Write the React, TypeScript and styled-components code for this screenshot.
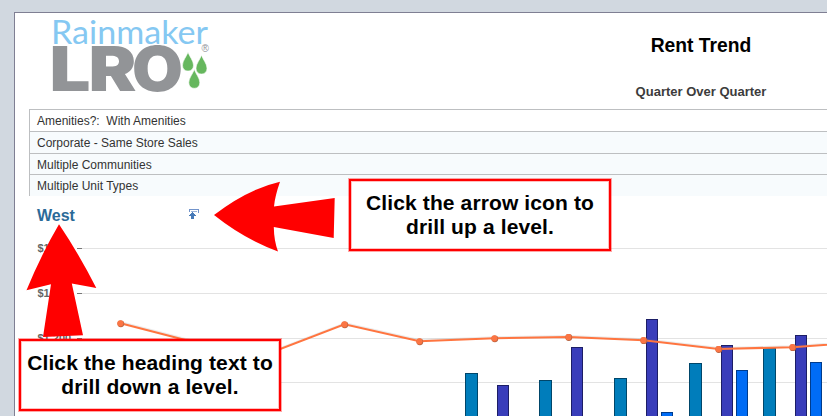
import React from "react";
import styled, { createGlobalStyle } from "styled-components";

const GlobalStyle = createGlobalStyle`
  * { box-sizing: border-box; }
  body {
    margin: 0;
    background: #d1d8e0;
    font-family: "Liberation Sans", Arial, sans-serif;
    overflow: hidden;
  }
`;

const Page = styled.div`
  position: relative;
  width: 827px;
  height: 416px;
  padding: 12px 0 0 14px;
  overflow: hidden;
`;

const Report = styled.main`
  height: 404px;
  border: solid #7f7f93;
  border-width: 1px 0 0 1px;
  background: #fff;
`;

const Header = styled.header`
  display: flex;
  height: 96px;
  padding-left: 35px;
`;

const Logo = styled.svg`
  flex: none;
  width: 170px;
  height: 84px;
  overflow: visible;
`;

const Titles = styled.div`
  display: flex;
  flex-direction: column;
  align-items: center;
  width: 200px;
  margin-left: 381px;
`;

const Title = styled.h1`
  margin: 21px 0 0;
  font-size: 19.3px;
  line-height: 23px;
  color: #000;
  white-space: nowrap;
`;

const Subtitle = styled.h2`
  margin: 27px 0 0;
  font-size: 13px;
  line-height: 15px;
  color: #3c3c3c;
  white-space: nowrap;
`;

const Filters = styled.ul`
  margin: 0 0 0 14px;
  padding: 0;
  list-style: none;
`;

const FilterRow = styled.li<{ $height: number; $tinted?: boolean }>`
  height: ${(p) => p.$height}px;
  padding: 4px 0 0 7px;
  border: solid #bdbfc1;
  border-width: 1px 0 0 1px;
  background: ${(p) => (p.$tinted ? "#f7fbfd" : "#fff")};
  font-size: 12px;
  line-height: 14px;
  color: #333;
  white-space: pre;
`;

const SectionHead = styled.div`
  display: flex;
  justify-content: space-between;
  width: 185px;
  height: 40px;
  padding: 11px 0 0 22px;
`;

const Region = styled.a`
  font-size: 16px;
  font-weight: bold;
  line-height: 18px;
  color: #2b6a98;
`;

const DrillIcon = styled.svg`
  width: 11px;
  height: 11px;
  margin-top: 2px;
`;

const Chart = styled.svg`
  display: block;
  width: 812px;
  height: 180px;
`;

const AxisLabel = styled.text`
  font: bold 11px "Liberation Sans", Arial, sans-serif;
  fill: #666;
`;

const Annotations = styled.svg`
  position: absolute;
  inset: 0;
  width: 827px;
  height: 416px;
  fill: #f00;
`;

const Callout = styled.div<{ $x: number; $y: number }>`
  position: absolute;
  left: ${(p) => p.$x}px;
  top: ${(p) => p.$y}px;
  width: 262px;
  height: 72px;
  padding-top: 10px;
  border: 2px solid #f00;
  box-shadow: 0 0 0 1px rgba(255, 0, 0, 0.35), inset 0 0 0 1px rgba(255, 0, 0, 0.25);
  background: #fff;
  font-size: 21px;
  font-weight: bold;
  line-height: 24px;
  letter-spacing: 0.12px;
  text-align: center;
  color: #000;
  white-space: pre;
`;

const gridLines = [248, 293, 338, 382];
const labels = ["$1,600", "$1,400", "$1,200"];

const palette = {
  teal: ["#007dbb", "#00466a"],
  indigo: ["#393dba", "#1c1e66"],
  blue: ["#006cf5", "#003c8c"],
};

const bars: { x: number; top: number; w: number; tone: keyof typeof palette }[] = [
  { x: 465, top: 373, w: 13, tone: "teal" },
  { x: 497, top: 385, w: 12, tone: "indigo" },
  { x: 539, top: 380, w: 13, tone: "teal" },
  { x: 571, top: 347, w: 12, tone: "indigo" },
  { x: 614, top: 378, w: 13, tone: "teal" },
  { x: 646, top: 319, w: 12, tone: "indigo" },
  { x: 661, top: 412, w: 12, tone: "blue" },
  { x: 689, top: 363, w: 13, tone: "teal" },
  { x: 721, top: 345, w: 12, tone: "indigo" },
  { x: 736, top: 370, w: 12, tone: "blue" },
  { x: 763, top: 348, w: 13, tone: "teal" },
  { x: 795, top: 335, w: 12, tone: "indigo" },
  { x: 810, top: 362, w: 12, tone: "blue" },
];

const trend = [
  [120.5, 323.3], [195, 342.5], [270, 353], [344.5, 324.3], [419.5, 341.3],
  [494.5, 338.3], [568.5, 337], [643.5, 340.2], [718.5, 349], [792.5, 347.2], [867, 342],
];
const trendPoints = trend.map((p) => p.join(",")).join(" ");

const drop = "M0 0C1.4 4.6 5.5 8.6 5.5 13.2C5.5 17 3.2 19 0 19S-5.5 17-5.5 13.2C-5.5 8.6-1.4 4.6 0 0Z";

function RainmakerLogo() {
  return (
    <Logo viewBox="50 13 170 84" aria-label="Rainmaker LRO">
      <text x="51" y="44" fontFamily="Lato" fontSize="33" fill="#85c8f2" textLength="157" lengthAdjust="spacingAndGlyphs">Rainmaker</text>
      <g fontFamily="Inter" fontWeight="900" fontSize="61.5" fill="#929497">
        <text x="49.5" y="90.7" textLength="41" lengthAdjust="spacingAndGlyphs">L</text>
        <text x="88.5" y="90.7" textLength="48" lengthAdjust="spacingAndGlyphs">R</text>
        <text x="132" y="90.7" textLength="51" lengthAdjust="spacingAndGlyphs">O</text>
      </g>
      <g fill="#66b75e" stroke="#fff" strokeWidth="0.6">
        <path d={drop} transform="translate(188 52)" />
        <path d={drop} transform="translate(201.5 55)" />
        <path d={drop} transform="translate(194.3 69.3)" />
      </g>
      <text x="201.5" y="52" fontFamily="Liberation Sans" fontSize="10" fill="#929497">®</text>
    </Logo>
  );
}

function TrendChart() {
  return (
    <Chart viewBox="15 236 812 180">
      {gridLines.map((y) => (
        <g key={y} shapeRendering="crispEdges">
          <rect x="82" y={y} width="745" height="1" fill="#e3e3e3" />
          <rect x="77" y={y} width="5" height="1" fill="#777" />
        </g>
      ))}
      {labels.map((t, i) => (
        <AxisLabel key={t} x="37.5" y={gridLines[i] + 4}>{t}</AxisLabel>
      ))}
      {bars.map((b) => (
        <rect key={b.x} x={b.x + 0.5} y={b.top + 0.5} width={b.w - 1} height="110" fill={palette[b.tone][0]} stroke={palette[b.tone][1]} />
      ))}
      <polyline points={trendPoints} fill="none" stroke="#777" strokeOpacity="0.15" strokeWidth="2" transform="translate(0.5 -1)" />
      <polyline points={trendPoints} fill="none" stroke="#ff7540" strokeWidth="2.1" />
      {trend.map(([x, y]) => (
        <g key={x}>
          <circle cx={x + 0.3} cy={y + 0.5} r="3.4" fill="#b8623f" />
          <circle cx={x - 0.1} cy={y} r="3.1" fill="#fb7544" />
        </g>
      ))}
    </Chart>
  );
}

export default function App() {
  return (
    <>
      <GlobalStyle />
      <Page>
        <Report>
          <Header>
            <RainmakerLogo />
            <Titles>
              <Title>Rent Trend</Title>
              <Subtitle>Quarter Over Quarter</Subtitle>
            </Titles>
          </Header>
          <Filters>
            <FilterRow $height={22}>{"Amenities?:  With Amenities"}</FilterRow>
            <FilterRow $height={22} $tinted>Corporate - Same Store Sales</FilterRow>
            <FilterRow $height={21} $tinted>Multiple Communities</FilterRow>
            <FilterRow $height={22} $tinted>Multiple Unit Types</FilterRow>
          </Filters>
          <SectionHead>
            <Region>West</Region>
            <DrillIcon viewBox="0 0 11 11" shapeRendering="crispEdges">
              <path d="M0 0H10V4H9V1H1V3H0Z" fill="#7294cb" />
              <path d="M2 2H8V3H2Z" fill="#9ab3da" />
              <path d="M3 3H4V4H5V5H6V6H7V7H5V10H2V7H0V6H1V5H2V4H3Z" fill="#477ab8" />
            </DrillIcon>
          </SectionHead>
          <TrendChart />
        </Report>
        <Annotations viewBox="0 0 827 416">
          <path d="M214 215Q248 189 280 181.8Q275 196 274 206.5L334.7 198L333.7 238L273.8 227Q274 241 278 251.4Q244 239 214 215Z" />
          <path d="M59 224.3Q79 254 96.3 288L71.8 283.6L83 335.3L43 337L51 284.2L26.5 290.2Q41 255 59 224.3Z" />
        </Annotations>
        <Callout $x={349} $y={179}>{"Click the arrow icon to\ndrill up a level."}</Callout>
        <Callout $x={19} $y={339}>{"Click the heading text to\ndrill down a level."}</Callout>
      </Page>
    </>
  );
}
